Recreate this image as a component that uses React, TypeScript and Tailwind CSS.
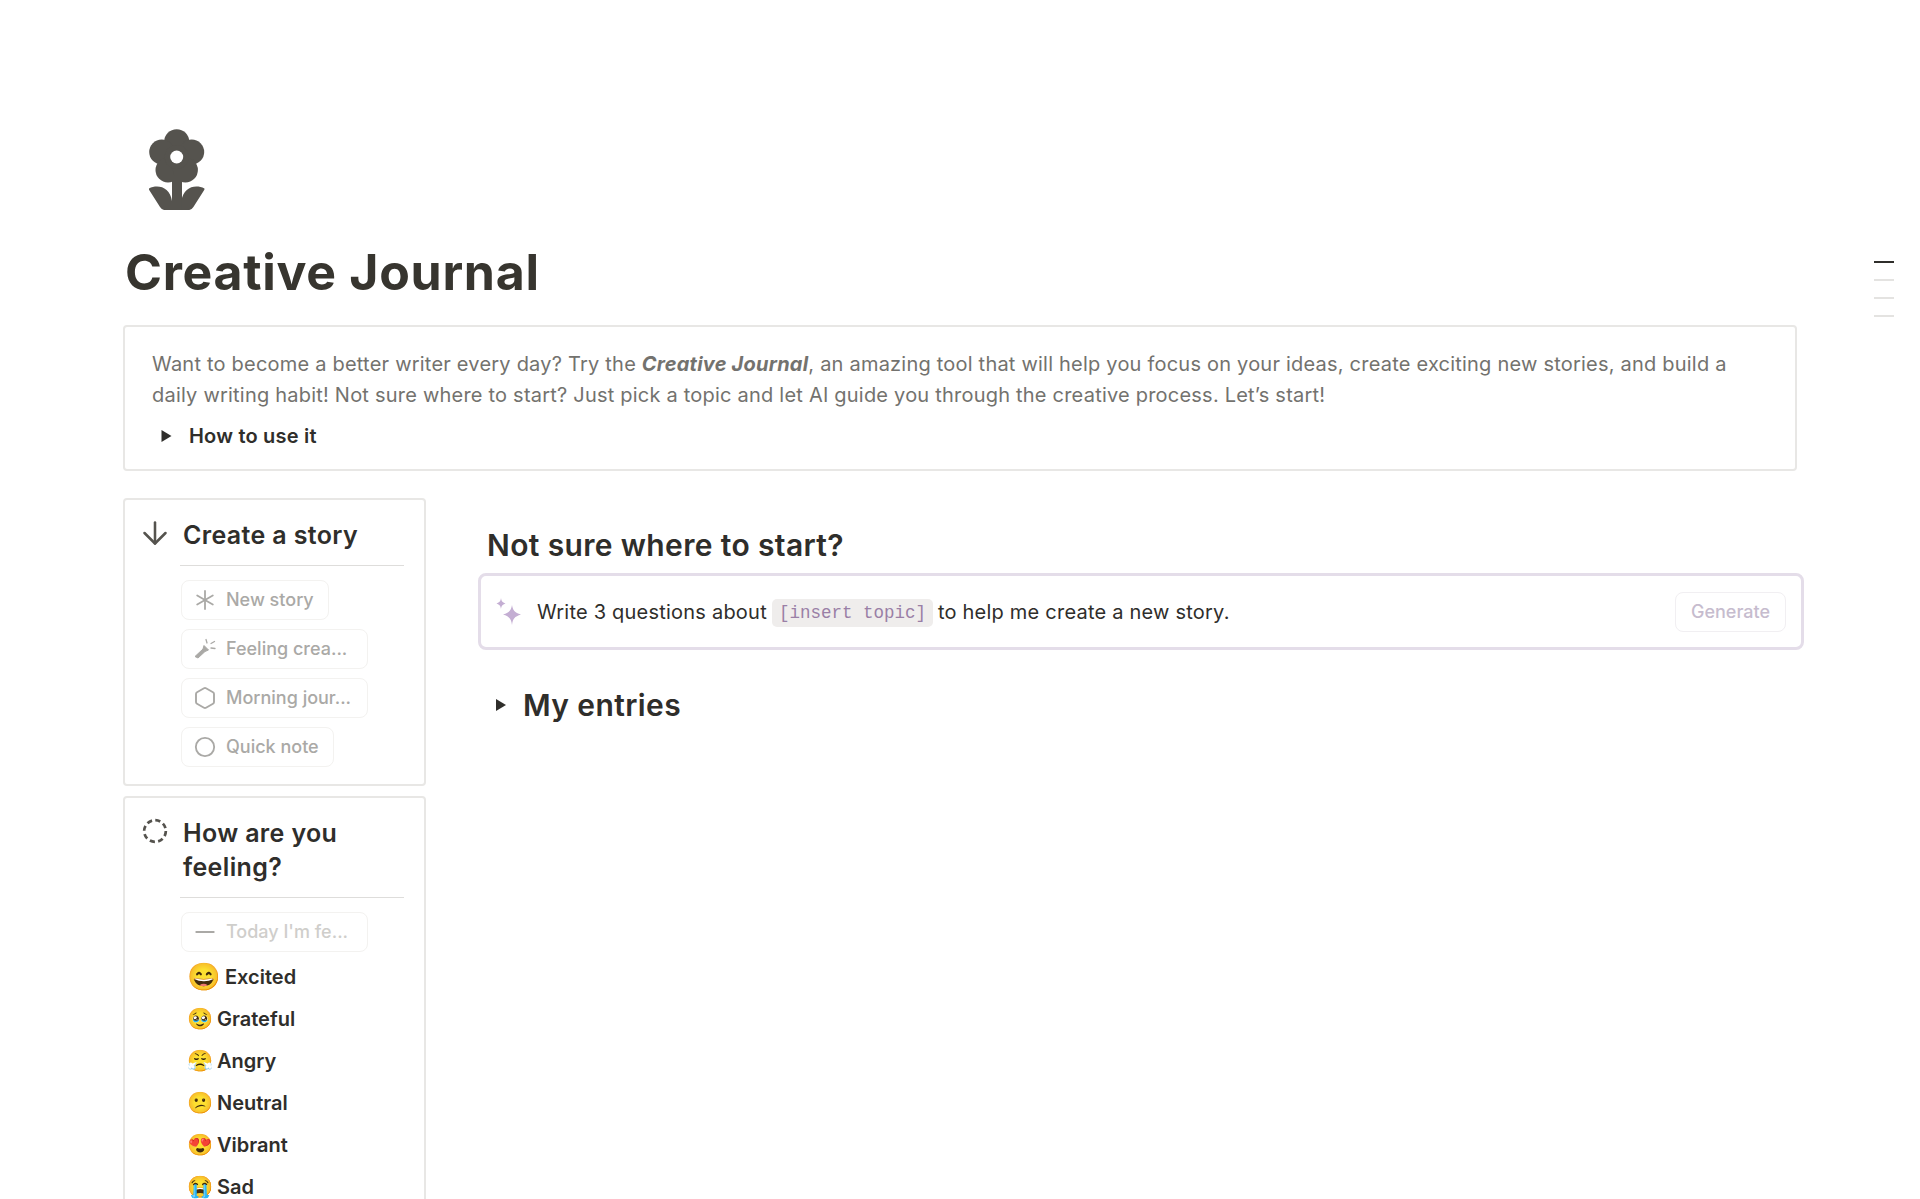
import { ArrowDown, Asterisk, Hexagon, Circle, Minus } from "lucide-react";
import type { ReactNode } from "react";

function Flower() {
  return (
    <svg viewBox="149 128 56 83" className="w-[56px] h-[83px] fill-[#55534e]">
      <circle cx="176.700" cy="141.700" r="12.500" />
      <circle cx="161.700" cy="152" r="12.500" />
      <circle cx="191.700" cy="152" r="12.500" />
      <circle cx="168" cy="170" r="12.500" />
      <circle cx="185.400" cy="170" r="12.500" />
      <circle cx="176.700" cy="157" r="12" />
      <circle cx="176.700" cy="157" r="6.500" fill="#fff" />
      <path d="M172 176h10v34h-10z" />
      <path d="M149 188.500C158 184 170 187 172 201V210H164Q162 210 160 207L149.500 190.500Q148.500 189 149 188.500Z" />
      <path d="M204.400 188.500C195.400 184 183.400 187 181.400 201V210H189.400Q191.400 210 193.400 207L203.900 190.500Q204.900 189 204.400 188.500Z" />
    </svg>
  );
}

function Torch() {
  return (
    <svg viewBox="0 0 22 22" className="w-[22px] h-[22px] fill-[#aaa9a6] stroke-[#aaa9a6]">
      <path d="M1 18.500l8-7.500 1-3.500 4.500 4.500-3.500 1.500-7 6.500z" strokeWidth="1" strokeLinejoin="round" />
      <path d="M12 1.500l1 3.500M17 5.500l3.500-2M17 10l4 .5" fill="none" strokeWidth="1.300" strokeLinecap="round" />
    </svg>
  );
}

function Sparkle() {
  return (
    <svg viewBox="0 0 28 28" className="w-[28px] h-[28px] shrink-0 fill-[#c4aed3]">
      <path d="M17 7c.8 5 2.500 7.500 9 9.500-6.500 2-8.200 4.500-9 10.500-.8-6-2.500-8.500-9-10.500 6.500-2 8.200-4.500 9-9.500z" />
      <path d="M6 0c.4 3 1.300 4.300 4.500 5.500C7.300 6.700 6.400 8 6 11 5.600 8 4.700 6.700 1.500 5.500 4.700 4.300 5.600 3 6 0z" />
    </svg>
  );
}

function Triangle({ size }: { size: string }) {
  return (
    <svg viewBox="0 0 10 12" className={size}>
      <path d="M0 0l10 6-10 6z" fill="#2f2e2b" />
    </svg>
  );
}

function TemplateButton({ icon, label, width, light }: { icon: ReactNode; label: string; width: string; light?: boolean }) {
  return (
    <div className={`flex items-center h-[40px] pl-[12px] rounded-lg border border-[#f3f2f0] text-lg font-medium ${width} ${light ? "text-[#cfcecb]" : "text-[#aaa9a6]"}`}>
      <span className="w-[22px] h-[22px] shrink-0 flex items-center justify-center text-[#aaa9a6]">{icon}</span>
      <span className="ml-[10px] whitespace-nowrap">{label}</span>
    </div>
  );
}

function Feeling({ emoji, label, big }: { emoji: string; label: string; big?: boolean }) {
  return (
    <div className="flex items-center h-[42px] pl-[6px] gap-[4px] text-xl font-semibold text-[#2f2e2b]">
      <span className={big ? "text-[27px]" : "text-[21px]"}>{emoji}</span>
      <span>{label}</span>
    </div>
  );
}

export default function App() {
  return (
    <div className="relative h-[1199px] w-[1920px] overflow-hidden bg-white pt-[128px] pl-[123px] font-['Inter',sans-serif]">
      {/* page outline */}
      <div className="absolute left-[1874px] top-[261px] flex flex-col gap-[16px] w-[20px]">
        <div className="h-[2px] bg-[#2f2e2b]" />
        <div className="h-[2px] bg-[#e4e3e1]" />
        <div className="h-[2px] bg-[#e4e3e1]" />
        <div className="h-[2px] bg-[#e4e3e1]" />
      </div>

      <div className="pl-[26px]">
        <Flower />
      </div>
      <h1 className="mt-[32px] pl-[2px] text-[50px] leading-[58px] font-bold tracking-[0.7px] text-[#37352f]">Creative Journal</h1>

      <div className="mt-[24px] w-[1674px] h-[146px] rounded-[4px] border-2 border-[#e8e7e5] pt-[22px] pl-[27px]">
        <p className="text-xl leading-[31px] tracking-[0.215px] text-[#73726e]">
          Want to become a better writer every day? Try the <b className="italic font-bold">Creative Journal</b>, an amazing tool that will help you focus on your ideas, create exciting new stories, and build a
          <br />
          daily writing habit! Not sure where to start? Just pick a topic and let AI guide you through the creative process. Let’s start!
        </p>
        <div className="mt-[11px] flex items-center text-xl font-semibold tracking-[0.2px] text-[#2f2e2b]">
          <span className="ml-[9px] mr-[17px]"><Triangle size="w-[11px] h-[12px]" /></span>
          How to use it
        </div>
      </div>

      <div className="flex mt-[27px]">
        <div className="w-[303px] shrink-0 flex flex-col gap-[10px]">
          <div className="h-[288px] rounded-[4px] border-2 border-[#e8e7e5] pt-[18px] pl-[17px] pr-[20px]">
            <div className="flex">
              <span className="w-[26px] h-[26px] mt-[2px] shrink-0 flex items-center justify-center">
                <ArrowDown className="w-[36px] h-[36px] shrink-0 text-[#55534e]" strokeWidth={1.700} />
              </span>
              <div className="ml-[15px] text-[25px] leading-[34px] tracking-[0.35px] font-semibold text-[#2f2e2b]">Create a story</div>
            </div>
            <div className="ml-[38px] mt-[13px] h-[1px] bg-[#dedddb]" />
            <div className="ml-[39px] mt-[14px] flex flex-col gap-[9px]">
              <TemplateButton icon={<Asterisk className="w-[36px] h-[36px] shrink-0" strokeWidth={1.2} />} label="New story" width="w-[148px]" />
              <TemplateButton icon={<Torch />} label="Feeling crea..." width="w-[187px]" />
              <TemplateButton icon={<Hexagon className="w-[24px] h-[24px] shrink-0" strokeWidth={1.9} />} label="Morning jour..." width="w-[187px]" />
              <TemplateButton icon={<Circle className="w-[22px] h-[22px] shrink-0" strokeWidth={2} />} label="Quick note" width="w-[153px]" />
            </div>
          </div>

          <div className="h-[500px] rounded-[4px] border-2 border-[#e8e7e5] pt-[18px] pl-[17px] pr-[20px]">
            <div className="flex">
              <svg viewBox="0 0 24 24" className="w-[26px] h-[26px] mt-[2px] shrink-0 fill-none stroke-[#55534e]">
                <circle cx="12" cy="12" r="10" strokeWidth="2.500" strokeDasharray="4.800 3.050" />
              </svg>
              <div className="ml-[15px] text-[25px] leading-[34px] tracking-[0.35px] font-semibold text-[#2f2e2b]">How are you feeling?</div>
            </div>
            <div className="ml-[38px] mt-[13px] h-[1px] bg-[#dedddb]" />
            <div className="ml-[39px] mt-[14px]">
              <TemplateButton icon={<Minus className="w-[30px] h-[30px] shrink-0" strokeWidth={1.5} />} label="Today I'm fe..." width="w-[187px]" light />
              <div className="mt-[4px]">
                <Feeling emoji="😄" label="Excited" big />
                <Feeling emoji="🥹" label="Grateful" />
                <Feeling emoji="😤" label="Angry" />
                <Feeling emoji="😕" label="Neutral" />
                <Feeling emoji="😍" label="Vibrant" />
                <Feeling emoji="😭" label="Sad" />
              </div>
            </div>
          </div>
        </div>

        <div className="ml-[52px] w-[1326px] shrink-0">
          <h2 className="mt-[28px] pl-[9px] text-[30px] leading-[38px] tracking-[0.36px] font-semibold text-[#2f2e2b]">Not sure where to start?</h2>
          <div className="mt-[9px] h-[77px] rounded-lg border-[3px] border-[#e4dde9] flex items-center pl-[14px] pr-[15px]">
            <Sparkle />
            <div className="ml-[14px] text-xl tracking-[0.22px] text-[#2f2e2b] flex items-center whitespace-nowrap">
              <span>Write 3 questions about</span>
              <code className="mx-[5px] mt-[3px] px-[7px] py-[2px] rounded-[5px] bg-[#efedec] text-[#9a7fa6] text-[17.5px] tracking-normal font-['Liberation_Mono',monospace]">[insert topic]</code>
              <span>to help me create a new story.</span>
            </div>
            <div className="ml-auto h-[40px] w-[111px] flex items-center justify-center rounded-lg border border-[#f1eff2] text-lg font-medium text-[#c6bcce]">Generate</div>
          </div>
          <div className="mt-[35px] flex items-center pl-[18px] text-[30px] leading-[40px] tracking-[0.4px] font-semibold text-[#2f2e2b]">
            <Triangle size="w-[10px] h-[12px]" />
            <span className="ml-[17px]">My entries</span>
          </div>
        </div>
      </div>
    </div>
  );
}
